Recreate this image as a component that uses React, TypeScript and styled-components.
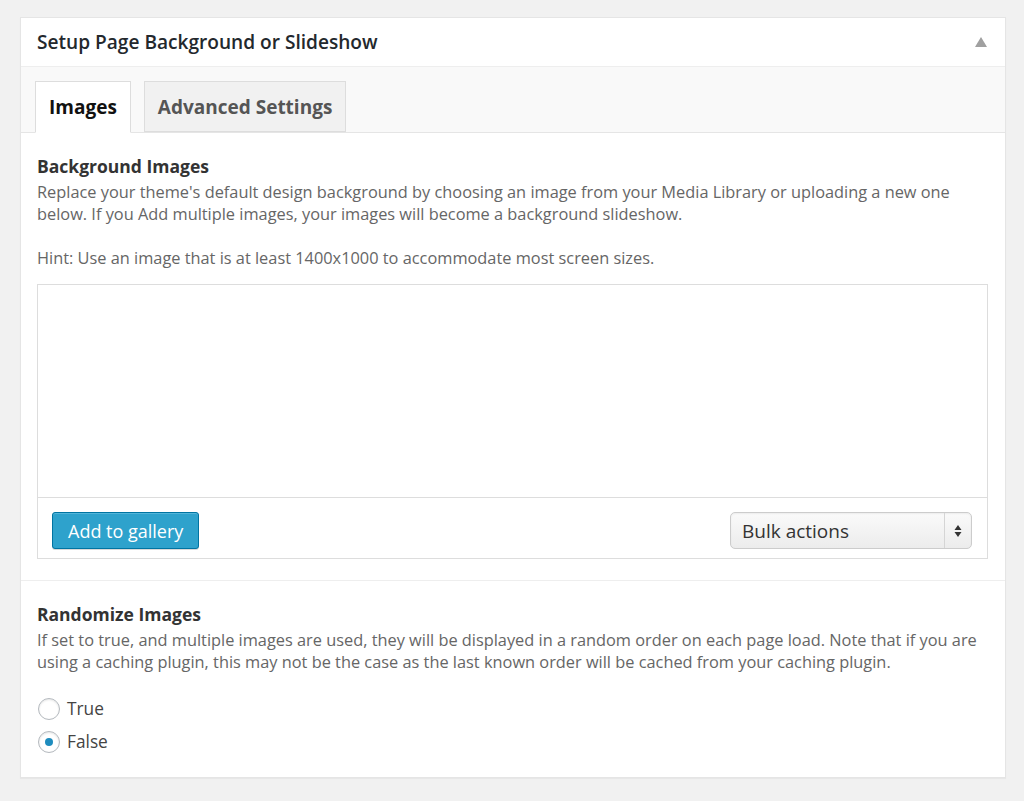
import React, { useState } from 'react';
import styled, { createGlobalStyle } from 'styled-components';

const GlobalStyle = createGlobalStyle`
	body {
		margin: 0;
		background: #f1f1f1;
		font-family: 'Open Sans', 'Noto Sans', sans-serif;
		color: #444;
	}
`;

const Page = styled.div`
	padding: 17px 18px 22px 20px;
`;

const Postbox = styled.div`
	background: #fff;
	border: 1px solid #e5e5e5;
	box-shadow: 0 1px 1px rgba(0, 0, 0, 0.04);
`;

const PostboxHeader = styled.div`
	display: flex;
	align-items: center;
	justify-content: space-between;
	height: 48px;
	padding: 0 18px 0 16px;
	border-bottom: 1px solid #eee;
`;

const PostboxTitle = styled.h2`
	margin: 0;
	font-size: 19.1px;
	font-weight: 600;
	color: #23282d;
`;

const Toggle = styled.span`
	width: 0;
	height: 0;
	border-left: 6px solid transparent;
	border-right: 6px solid transparent;
	border-bottom: 10px solid #a0a0a0;
`;

const TabBar = styled.div`
	display: flex;
	align-items: flex-end;
	gap: 13px;
	height: 65px;
	padding: 0 14px;
	background: #f9f9f9;
	border-bottom: 1px solid #e5e5e5;
`;

const Tab = styled.button<{ $active?: boolean }>`
	height: ${(p) => (p.$active ? '52px' : '51px')};
	margin-bottom: ${(p) => (p.$active ? '-1px' : '0')};
	padding: 0 13px;
	border: 1px solid #ddd;
	border-bottom: ${(p) => (p.$active ? '1px solid #fff' : '1px solid #ddd')};
	background: ${(p) => (p.$active ? '#fff' : '#f1f1f1')};
	color: ${(p) => (p.$active ? '#111' : '#555')};
	font-family: inherit;
	font-size: 19px;
	font-weight: 700;
	cursor: pointer;
`;

const Section = styled.div<{ $divider?: boolean }>`
	padding: 22px 17px 0 16px;
	border-bottom: ${(p) => (p.$divider ? '1px solid #eee' : 'none')};
	padding-bottom: ${(p) => (p.$divider ? '21px' : '24px')};
`;

const SectionTitle = styled.h3`
	margin: 0 0 4px;
	font-size: 17.5px;
	line-height: 22px;
	font-weight: 700;
	color: #333;
`;

const Description = styled.p<{ $gap?: number }>`
	margin: 0 0 ${(p) => p.$gap ?? 22}px;
	font-size: 16.35px;
	line-height: 22px;
	color: #666;
`;

const Gallery = styled.div`
	border: 1px solid #ddd;
`;

const GalleryArea = styled.div`
	height: 212px;
	border-bottom: 1px solid #ddd;
`;

const GalleryFooter = styled.div`
	display: flex;
	align-items: flex-start;
	justify-content: space-between;
	height: 46px;
	padding: 14px 15px 0 14px;
`;

const PrimaryButton = styled.button`
	height: 37px;
	padding: 0 15px;
	border: 1px solid #0074a2;
	border-radius: 3px;
	background: #2ea2cc;
	box-shadow: inset 0 1px 0 rgba(120, 200, 230, 0.5), 0 1px 0 rgba(0, 0, 0, 0.15);
	color: #fff;
	font-family: inherit;
	font-size: 18px;
	cursor: pointer;
`;

const SelectBox = styled.div`
	display: flex;
	align-items: stretch;
	width: 242px;
	height: 37px;
	box-sizing: border-box;
	border: 1px solid #ccc;
	border-radius: 5px;
	background: linear-gradient(#fafafa, #ececec);
	box-shadow: inset 0 1px 2px rgba(0, 0, 0, 0.06);
	color: #333;
	font-size: 19px;
`;

const SelectLabel = styled.span`
	flex: 1;
	display: flex;
	align-items: center;
	padding-left: 11px;
`;

const SelectArrows = styled.span`
	display: flex;
	align-items: center;
	justify-content: center;
	width: 26px;
	border-left: 1px solid #d5d5d5;
`;

const RadioList = styled.div`
	display: flex;
	flex-direction: column;
	gap: 10px;
	padding-top: 2px;
`;

const RadioRow = styled.label`
	display: flex;
	align-items: center;
	gap: 7px;
	font-size: 17.3px;
	color: #444;
	cursor: pointer;
`;

const RadioCircle = styled.span<{ $checked?: boolean }>`
	display: flex;
	align-items: center;
	justify-content: center;
	width: 20px;
	height: 20px;
	margin-left: 1px;
	border: 1px solid #b4b9be;
	border-radius: 50%;
	box-shadow: inset 0 1px 2px rgba(0, 0, 0, 0.1);

	&::after {
		content: '';
		display: ${(p) => (p.$checked ? 'block' : 'none')};
		width: 8px;
		height: 8px;
		border-radius: 50%;
		background: #1e8cbe;
	}
`;

export default function App() {
	const [tab, setTab] = useState('images');
	const [random, setRandom] = useState(false);

	return (
		<Page>
			<GlobalStyle />
			<Postbox>
				<PostboxHeader>
					<PostboxTitle>Setup Page Background or Slideshow</PostboxTitle>
					<Toggle />
				</PostboxHeader>

				<TabBar>
					<Tab $active={tab === 'images'} onClick={() => setTab('images')}>
						Images
					</Tab>
					<Tab $active={tab === 'advanced'} onClick={() => setTab('advanced')}>
						Advanced Settings
					</Tab>
				</TabBar>

				<Section $divider>
					<SectionTitle>Background Images</SectionTitle>
					<Description>
						Replace your theme's default design background by choosing an image from your Media Library or
						uploading a new one below. If you Add multiple images, your images will become a background
						slideshow.
					</Description>
					<Description $gap={15}>
						Hint: Use an image that is at least 1400x1000 to accommodate most screen sizes.
					</Description>
					<Gallery>
						<GalleryArea />
						<GalleryFooter>
							<PrimaryButton>Add to gallery</PrimaryButton>
							<SelectBox>
								<SelectLabel>Bulk actions</SelectLabel>
								<SelectArrows>
									<svg width="8" height="14" viewBox="0 0 8 14">
										<path d="M4 1 L7.5 6 H0.5 Z M4 13 L7.5 8 H0.5 Z" fill="#333" />
									</svg>
								</SelectArrows>
							</SelectBox>
						</GalleryFooter>
					</Gallery>
				</Section>

				<Section>
					<SectionTitle>Randomize Images</SectionTitle>
					<Description>
						If set to true, and multiple images are used, they will be displayed in a random order on each page
						load. Note that if you are using a caching plugin, this may not be the case as the last known order
						will be cached from your caching plugin.
					</Description>
					<RadioList>
						<RadioRow onClick={() => setRandom(true)}>
							<RadioCircle $checked={random} />
							True
						</RadioRow>
						<RadioRow onClick={() => setRandom(false)}>
							<RadioCircle $checked={!random} />
							False
						</RadioRow>
					</RadioList>
				</Section>
			</Postbox>
		</Page>
	);
}
